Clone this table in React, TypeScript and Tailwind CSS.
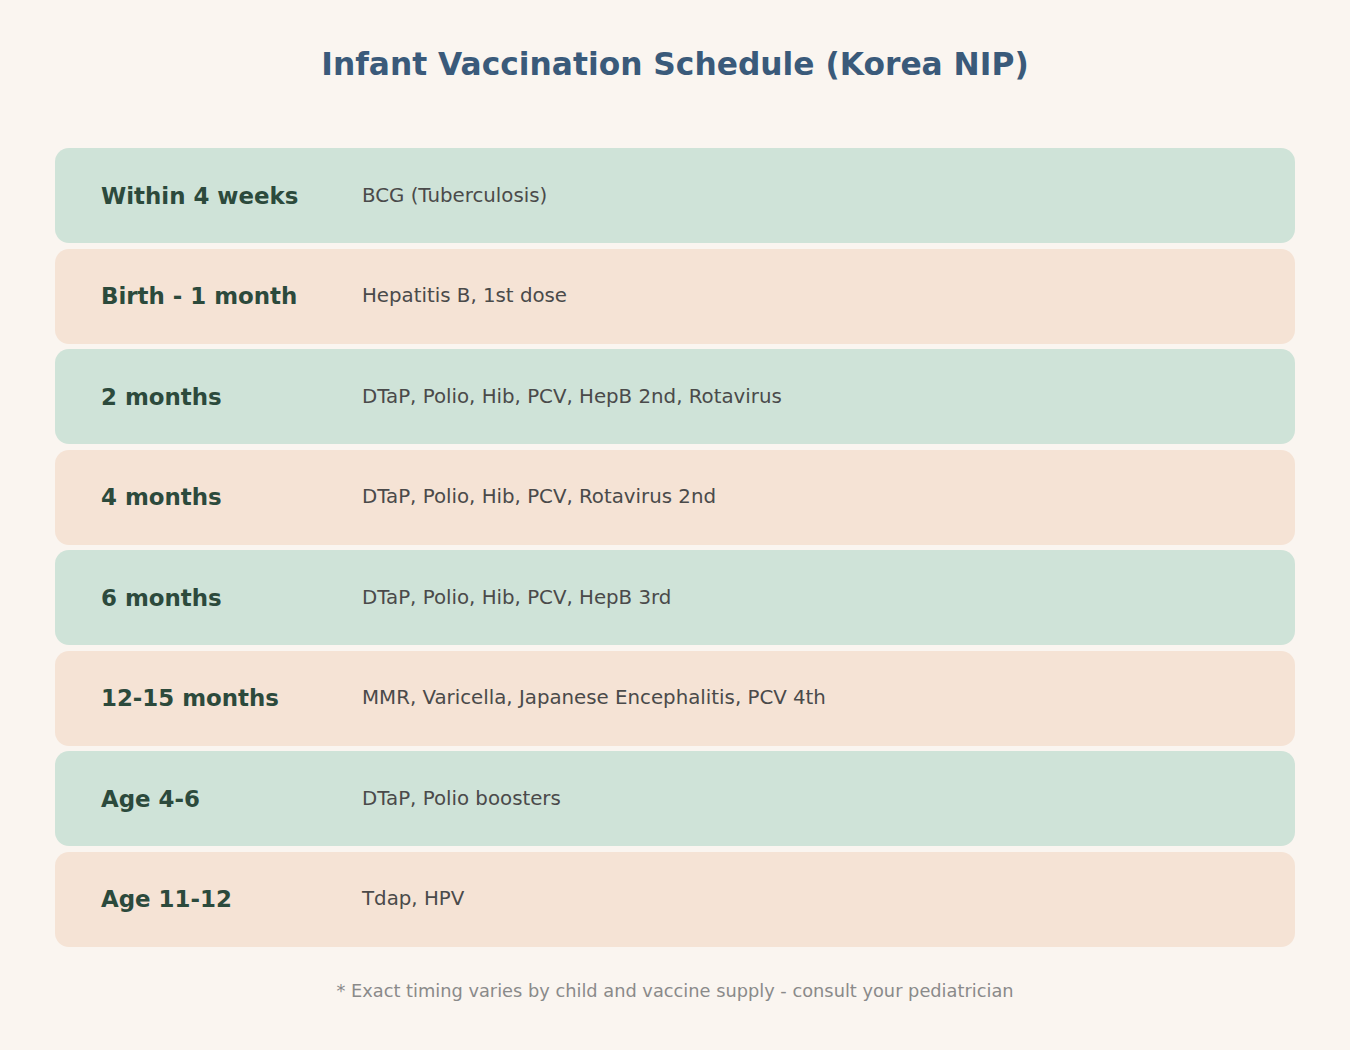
import React from "react";

const rows = [
  { label: "Within 4 weeks", desc: "BCG (Tuberculosis)" },
  { label: "Birth - 1 month", desc: "Hepatitis B, 1st dose" },
  { label: "2 months", desc: "DTaP, Polio, Hib, PCV, HepB 2nd, Rotavirus" },
  { label: "4 months", desc: "DTaP, Polio, Hib, PCV, Rotavirus 2nd" },
  { label: "6 months", desc: "DTaP, Polio, Hib, PCV, HepB 3rd" },
  { label: "12-15 months", desc: "MMR, Varicella, Japanese Encephalitis, PCV 4th" },
  { label: "Age 4-6", desc: "DTaP, Polio boosters" },
  { label: "Age 11-12", desc: "Tdap, HPV" },
];

export default function App() {
  return (
    <div
      className="w-[1350px] h-[1050px] bg-[#faf5f0] flex flex-col items-center"
      style={{ fontFamily: '"DejaVu Sans", sans-serif' }}
    >
      <h1 className="mt-[44px] text-[31.3px] leading-[40px] font-bold text-[#3a5a7a]">
        Infant Vaccination Schedule (Korea NIP)
      </h1>
      <div className="mt-[64px] w-[1240px] flex flex-col gap-[5.5px]">
        {rows.map((r, i) => (
          <div
            key={i}
            className={`h-[95px] rounded-[14px] flex items-center pl-[46px] ${
              i % 2 === 0 ? "bg-[#cfe3d8]" : "bg-[#f5e3d5]"
            }`}
          >
            <div className="w-[261px] text-[22.9px] leading-[28px] font-bold text-[#2c4a3c]">{r.label}</div>
            <div className="text-[19.8px] leading-[26px] text-[#4a4a4a]">{r.desc}</div>
          </div>
        ))}
      </div>
      <div className="mt-[32px] text-[17.8px] leading-[24px] text-[#8a8a8a]">
        * Exact timing varies by child and vaccine supply - consult your pediatrician
      </div>
    </div>
  );
}
